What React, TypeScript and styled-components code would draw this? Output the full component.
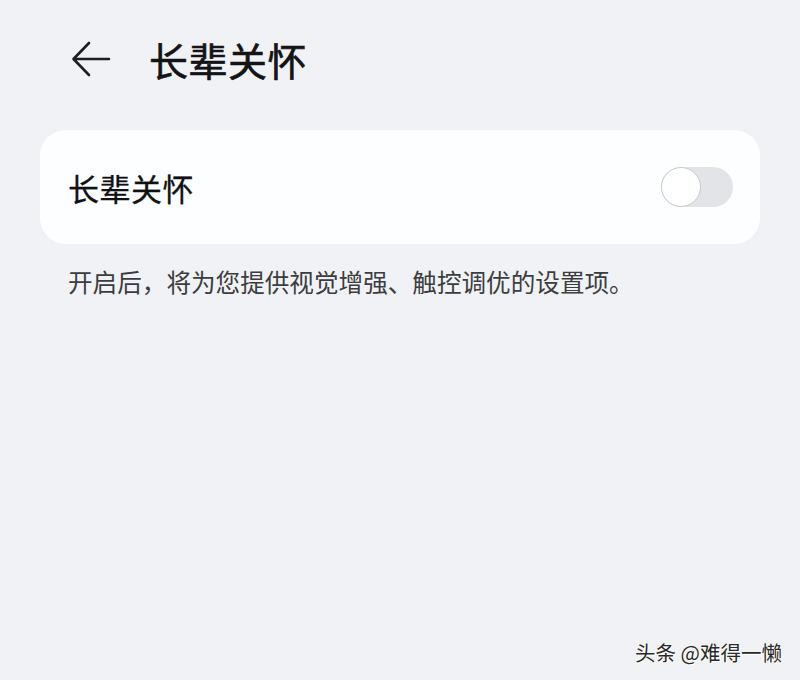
import styled, { createGlobalStyle } from "styled-components";

const GlobalStyle = createGlobalStyle`
  html, body {
    margin: 0;
    padding: 0;
    background: #f1f2f6;
  }
  body {
    font-family: "Noto Sans CJK SC", "Noto Sans", sans-serif;
  }
`;

const Page = styled.div`
  position: relative;
  width: 800px;
  height: 680px;
  box-sizing: border-box;
  padding: 0 40px;
  background: #f1f2f6;
  overflow: hidden;
`;

const Header = styled.div`
  height: 118px;
  display: flex;
  align-items: center;
  gap: 38px;
  padding-left: 31px;
`;

const BackButton = styled.button`
  width: 40px;
  height: 36px;
  padding: 0;
  border: none;
  background: transparent;
  display: flex;
  align-items: center;
  justify-content: center;
  cursor: pointer;
`;

const Title = styled.h1`
  margin: 0;
  font-size: 39px;
  font-weight: 400;
  color: #141416;
  line-height: 1.2;
  letter-spacing: 0.5px;
  -webkit-text-stroke: 0.6px #141416;
`;

const Card = styled.div`
  margin-top: 12px;
  height: 114px;
  box-sizing: border-box;
  padding: 0 27px 0 28px;
  background: #fdfeff;
  border-radius: 26px;
  display: flex;
  align-items: center;
  justify-content: space-between;
`;

const Label = styled.span`
  font-size: 31px;
  font-weight: 400;
  color: #111113;
  letter-spacing: 0.5px;
  -webkit-text-stroke: 0.3px #111113;
`;

const Switch = styled.div<{ $on: boolean }>`
  position: relative;
  width: 72px;
  height: 40px;
  border-radius: 20px;
  background: ${(p) => (p.$on ? "#0a59f7" : "#e3e4e8")};
  cursor: pointer;
`;

const Knob = styled.div<{ $on: boolean }>`
  position: absolute;
  top: 0;
  left: ${(p) => (p.$on ? "32px" : "0")};
  width: 40px;
  height: 40px;
  box-sizing: border-box;
  border-radius: 50%;
  background: #ffffff;
  border: 1.5px solid #c9cacf;
`;

const Description = styled.p`
  margin: 20px 0 0;
  padding-left: 28px;
  font-size: 24.6px;
  line-height: 35px;
  color: #3c3d40;
`;

const Watermark = styled.div`
  position: absolute;
  right: 18px;
  bottom: 13px;
  font-size: 20.5px;
  color: #2a2a2a;
  text-shadow: 1px 1px 0 #ffffff, -1px 0 0 #ffffff;
`;

export default function App() {
  return (
    <>
      <GlobalStyle />
      <Page>
        <Header>
          <BackButton aria-label="返回">
            <svg width="40" height="36" viewBox="0 0 40 36" fill="none">
              <path
                d="M38 18H3M18 2L2.5 18L18 34"
                stroke="#1e1e20"
                strokeWidth="2.6"
                strokeLinecap="round"
                strokeLinejoin="round"
              />
            </svg>
          </BackButton>
          <Title>长辈关怀</Title>
        </Header>
        <Card>
          <Label>长辈关怀</Label>
          <Switch $on={false}>
            <Knob $on={false} />
          </Switch>
        </Card>
        <Description>开启后，将为您提供视觉增强、触控调优的设置项。</Description>
        <Watermark>头条 @难得一懒</Watermark>
      </Page>
    </>
  );
}
